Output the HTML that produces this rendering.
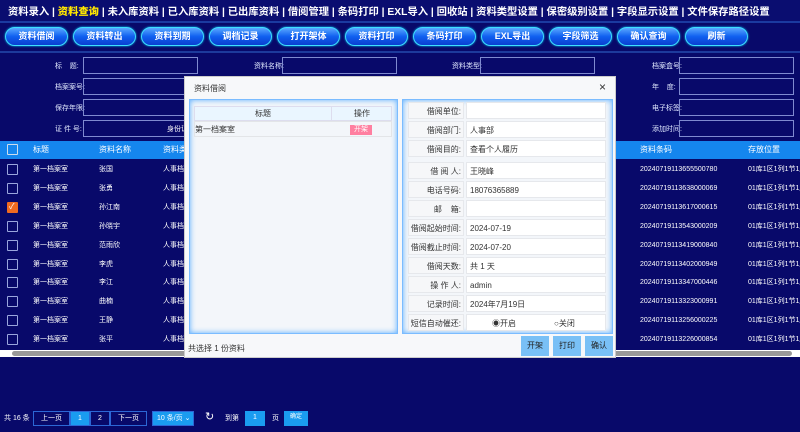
<!DOCTYPE html><html><head><meta charset="utf-8"><style>
*{margin:0;padding:0;box-sizing:border-box}
body{width:800px;height:432px;overflow:hidden;background:#08096a;font-family:"Liberation Sans","Noto Sans CJK SC",sans-serif;position:relative;color:#fff}
.a{position:absolute;white-space:nowrap}
.nav{left:0;top:0;width:800px;height:23px;background:#0a0d70;border-bottom:2px solid #1b3aa0;font-size:10.3px;font-weight:bold;line-height:25px;padding-left:8px;white-space:nowrap;overflow:hidden}
.nav b{color:#ffe600}
.btn{top:27px;width:63px;height:19px;border-radius:10px;background:linear-gradient(#5aa8ff,#1060f0 50%,#0a3fd0);border:1px solid #3de0ff;box-shadow:0 0 2px #00c8ff;font-size:9px;font-weight:bold;text-align:center;line-height:17px}
.sep{left:0;top:51px;width:800px;height:2px;background:#1d3a9c}
.lb{font-size:7px;color:#e0e8ff}
.in{border:1px solid #7f8ad0;height:17px;width:115px}
.th{left:0;top:141px;width:800px;height:18px;background:#1586ee;font-size:8px;line-height:18px;overflow:hidden}
.row{left:0;width:800px;height:19px;font-size:7px;line-height:19px;overflow:hidden}
.cb{position:absolute;left:7px;top:4px;width:11px;height:11px;border:1px solid #9aa6dd;border-radius:1px}
.modal{left:184px;top:76px;width:432px;height:282px;background:#f7f8fa;color:#333;border:1px solid #ccc}
.panel{background:#f3f6fa;border:1px solid #7bbcff;box-shadow:inset 0 0 6px #5aaeff}
.fr{position:absolute;left:5px;width:199px;height:17px;font-size:8px;line-height:17px}
.fl{position:absolute;left:0;width:56px;height:17px;background:#f6f7f9;border:1px solid #e6e8ec;text-align:right;padding-right:2px}
.fv{position:absolute;left:58px;width:140px;height:17px;background:#fff;border:1px solid #e6e8ec;padding-left:3px}
.mb{top:259px;height:20px;width:28px;background:#79c0f6;font-size:8px;text-align:center;line-height:20px;color:#222}
.pg{top:411px;height:15px;font-size:7px;line-height:13px;text-align:center;border:1px solid #2c67d5}
</style></head><body>
<div class="a nav">资料录入 | <b>资料查询</b> | 未入库资料 | 已入库资料 | 已出库资料 | 借阅管理 | 条码打印 | EXL导入 | 回收站 | 资料类型设置 | 保密级别设置 | 字段显示设置 | 文件保存路径设置</div>
<div class="a btn" style="left:5px">资料借阅</div><div class="a btn" style="left:73px">资料转出</div><div class="a btn" style="left:141px">资料到期</div><div class="a btn" style="left:209px">调档记录</div><div class="a btn" style="left:277px">打开架体</div><div class="a btn" style="left:345px">资料打印</div><div class="a btn" style="left:413px">条码打印</div><div class="a btn" style="left:481px">EXL导出</div><div class="a btn" style="left:549px">字段筛选</div><div class="a btn" style="left:617px">确认查询</div><div class="a btn" style="left:685px">刷新</div>
<div class="a sep"></div>
<div class="a lb" style="left:55px;top:61px">标&nbsp;&nbsp;&nbsp;&nbsp;题:</div><div class="a in" style="left:83px;top:57px"></div>
<div class="a lb" style="left:55px;top:82px">档案案号:</div><div class="a in" style="left:83px;top:78px"></div>
<div class="a lb" style="left:55px;top:103px">保存年限:</div><div class="a in" style="left:83px;top:99px"></div>
<div class="a lb" style="left:55px;top:124px">证 件 号:</div><div class="a in" style="left:83px;top:120px"><span style="font-size:7px;position:absolute;left:83px;top:3px">身份证</span></div>
<div class="a lb" style="left:254px;top:61px">资料名称:</div><div class="a in" style="left:282px;top:57px"></div>
<div class="a lb" style="left:452px;top:61px">资料类型:</div><div class="a in" style="left:480px;top:57px"></div>
<div class="a lb" style="left:652px;top:61px">档案盒号:</div><div class="a in" style="left:679px;top:57px"></div>
<div class="a lb" style="left:652px;top:82px">年&nbsp;&nbsp;&nbsp;&nbsp;度:</div><div class="a in" style="left:679px;top:78px"></div>
<div class="a lb" style="left:652px;top:103px">电子标签:</div><div class="a in" style="left:679px;top:99px"></div>
<div class="a lb" style="left:652px;top:124px">添加时间:</div><div class="a in" style="left:679px;top:120px"></div>
<div class="a th"><div class="cb" style="top:3px;border-color:#cde"></div><span class="a" style="left:33px">标题</span><span class="a" style="left:99px">资料名称</span><span class="a" style="left:163px">资料类</span><span class="a" style="left:640px">资料条码</span><span class="a" style="left:748px">存放位置</span></div>
<div id="rows"></div>
<div class="a" style="left:0;top:350px;width:800px;height:7px;background:#fff"><div class="a" style="left:12px;top:1px;width:780px;height:5px;background:#999;border-radius:3px"></div></div>
<div class="a" style="left:4px;top:413px;font-size:7px">共 16 条</div>
<div class="a pg" style="left:33px;width:37px">上一页</div><div class="a pg" style="left:70px;width:20px;background:#1a9cf0">1</div><div class="a pg" style="left:90px;width:20px">2</div><div class="a pg" style="left:110px;width:37px">下一页</div>
<div class="a pg" style="left:152px;width:42px;background:#1a9cf0;text-align:left;padding-left:4px">10 条/页 ⌄</div>
<div class="a" style="left:205px;top:410px;font-size:11px">↻</div>
<div class="a" style="left:225px;top:413px;font-size:7px">到第</div>
<div class="a pg" style="left:245px;width:20px;background:#1a9cf0;border:0">1</div>
<div class="a" style="left:272px;top:413px;font-size:7px">页</div>
<div class="a pg" style="left:284px;width:24px;background:#1a9cf0;border:0;font-size:6px">确定</div>
<div class="a modal">
<div class="a" style="left:9px;top:6px;font-size:8px">资料借阅</div><div class="a" style="left:414px;top:3px;font-size:12px">×</div>
<div class="a panel" style="left:4px;top:22px;width:209px;height:235px">
<div class="a" style="left:4px;top:6px;width:198px;height:15px;background:#eaf6ff;border:1px solid #dde;font-size:8px;line-height:14px"><span class="a" style="left:60px">标题</span><span class="a" style="left:136px;top:0;width:1px;height:14px;background:#dde"></span><span class="a" style="left:159px">操作</span></div>
<div class="a" style="left:4px;top:21px;width:198px;height:16px;border:1px solid #e3e5e8;font-size:8px;line-height:15px">第一档案室<span class="a" style="left:155px;top:3px;width:22px;height:10px;background:#ff7fa0;color:#fff;font-size:7px;line-height:10px;text-align:center">开架</span></div>
</div>
<div class="a panel" style="left:217px;top:22px;width:211px;height:235px" id="rp"></div>
<div class="a" style="left:3px;top:266px;font-size:8px">共选择 1 份资料</div>
<div class="a mb" style="left:336px">开架</div><div class="a mb" style="left:368px">打印</div><div class="a mb" style="left:400px">确认</div>
</div>
<script>
var names=["张国","张勇","孙江南","孙晓宇","范雨欣","李虎","李江","曲楠","王静","张平"];
var codes=["20240719113655500780","20240719113638000069","20240719113617000615","20240719113543000209","20240719113419000840","20240719113402000949","20240719113347000446","20240719113323000991","20240719113256000225","20240719113226000854"];
var h="";for(var i=0;i<10;i++){var t=160+i*18.9;h+='<div class="a row" style="top:'+t+'px"><div class="cb" style="'+(i==2?'background:#f06a20;border-color:#f06a20;':'')+'">'+(i==2?'<span style="position:absolute;left:1px;top:-6px;font-size:8px">✓</span>':'')+'</div><span class="a" style="left:33px">第一档案室</span><span class="a" style="left:99px">'+names[i]+'</span><span class="a" style="left:163px">人事档</span><span class="a" style="left:640px">'+codes[i]+'</span><span class="a" style="left:748px">01库1区1列1节1层</span></div>'}
document.getElementById("rows").innerHTML=h;
var L=["借阅单位:","借阅部门:","借阅目的:","借 阅 人:","电话号码:","邮&nbsp;&nbsp;&nbsp;&nbsp;箱:","借阅起始时间:","借阅截止时间:","借阅天数:","操 作 人:","记录时间:","短信自动催还:"];
var V=["","人事部","查看个人履历","王晓峰","18076365889","","2024-07-19","2024-07-20","共 1 天","admin","2024年7月19日",'<span style="margin-left:22px">◉开启</span><span style="margin-left:38px">○关闭</span>'];
var T=[2,21,40,62,81,100,119,138,157,176,195,214];var r="";
for(var j=0;j<12;j++){r+='<div class="fr" style="top:'+T[j]+'px"><div class="fl">'+L[j]+'</div><div class="fv">'+V[j]+'</div></div>'}
document.getElementById("rp").innerHTML=r;
</script>
</body></html>
